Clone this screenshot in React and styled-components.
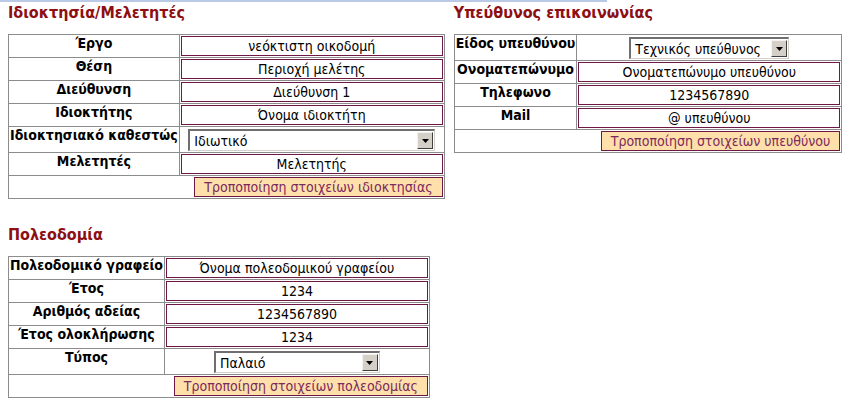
import React from 'react';
import styled, { createGlobalStyle } from 'styled-components';

const GlobalStyle = createGlobalStyle`
  body {
    margin: 0;
    background: #ffffff;
  }
`;

const FONT = `"DejaVu Sans Condensed", "DejaVu Sans", Tahoma, sans-serif`;
const GRID = '#8c8c8c';
const PURPLE = '#6e1848';

const Page = styled.div`
  font-family: ${FONT};
  font-size: 14px;
  color: #000;
`;

const TopLine = styled.div`
  width: 607px;
  height: 2px;
  background: #b9c9e6;
`;

const Content = styled.div`
  padding: 0 8px;
`;

const TopRow = styled.div`
  display: flex;
  align-items: flex-start;
  gap: 9px;
`;

const Section = styled.section`
  margin-top: ${(p) => p.top || 2}px;
`;

const Heading = styled.h2`
  margin: 0 0 12px 0;
  font-size: 16px;
  line-height: 18px;
  font-weight: bold;
  color: #8d0f12;
`;

const Grid = styled.table`
  border-collapse: collapse;
  border: 1px solid ${GRID};
`;

const LabelCell = styled.td`
  border: 1px solid ${GRID};
  padding: 1px;
  font-weight: bold;
  text-align: center;
  vertical-align: top;
  white-space: nowrap;
  line-height: 15px;
`;

const ValueCell = styled.td`
  border: 1px solid ${GRID};
  padding: ${(p) => (p.select ? '2px 1px 1px' : '1px')};
  text-align: center;
  vertical-align: middle;
`;

const ActionCell = styled.td`
  border: 1px solid ${GRID};
  padding: 1px;
  text-align: right;
`;

const Field = styled.div`
  box-sizing: border-box;
  width: 262px;
  height: 20px;
  border: 1px solid ${PURPLE};
  line-height: 18px;
  text-align: center;
  white-space: nowrap;
`;

const SelectBox = styled.div`
  box-sizing: border-box;
  display: inline-flex;
  align-items: center;
  width: ${(p) => p.width}px;
  height: 22px;
  border-top: 2px solid #6f6f6f;
  border-left: 2px solid #6f6f6f;
  border-right: 1px solid #d4d0c8;
  border-bottom: 1px solid #d4d0c8;
  background: #fff;
  vertical-align: middle;
`;

const SelectText = styled.span`
  flex: 1;
  padding-left: 4px;
  text-align: left;
  white-space: nowrap;
`;

const ArrowButton = styled.span`
  box-sizing: border-box;
  display: flex;
  align-items: center;
  justify-content: center;
  width: 16px;
  height: 17px;
  margin-right: 1px;
  background: #d4d0c8;
  border-top: 1px solid #f4f2ee;
  border-left: 1px solid #f4f2ee;
  border-right: 1px solid #404040;
  border-bottom: 1px solid #404040;
`;

const ActionButton = styled.button`
  height: 20px;
  padding: 0 9px;
  border: 1px solid ${PURPLE};
  background: #ffdfaa;
  color: #7a2a5e;
  font-family: ${FONT};
  font-size: 14px;
  line-height: 17px;
  cursor: pointer;
`;

function Select({ value, width }) {
  return (
    <SelectBox width={width}>
      <SelectText>{value}</SelectText>
      <ArrowButton>
        <svg width="7" height="4" viewBox="0 0 7 4">
          <path d="M0 0h7L3.5 4z" fill="#000" />
        </svg>
      </ArrowButton>
    </SelectBox>
  );
}

function FormTable({ rows, action }) {
  return (
    <Grid>
      <tbody>
        {rows.map((r) => (
          <tr key={r.label}>
            <LabelCell>{r.label}</LabelCell>
            <ValueCell select={!!r.select}>
              {r.select ? <Select value={r.value} width={r.select} /> : <Field>{r.value}</Field>}
            </ValueCell>
          </tr>
        ))}
        <tr>
          <ActionCell colSpan={2}>
            <ActionButton>{action}</ActionButton>
          </ActionCell>
        </tr>
      </tbody>
    </Grid>
  );
}

const ownership = [
  { label: 'Έργο', value: 'νεόκτιστη οικοδομή' },
  { label: 'Θέση', value: 'Περιοχή μελέτης' },
  { label: 'Διεύθυνση', value: 'Διεύθυνση 1' },
  { label: 'Ιδιοκτήτης', value: 'Όνομα ιδιοκτήτη' },
  { label: 'Ιδιοκτησιακό καθεστώς', value: 'Ιδιωτικό', select: 247 },
  { label: 'Μελετητές', value: 'Μελετητής' },
];

const contact = [
  { label: 'Είδος υπευθύνου', value: 'Τεχνικός υπεύθυνος', select: 160 },
  { label: 'Ονοματεπώνυμο', value: 'Ονοματεπώνυμο υπευθύνου' },
  { label: 'Τηλεφωνο', value: '1234567890' },
  { label: 'Mail', value: '@ υπευθύνου' },
];

const planning = [
  { label: 'Πολεοδομικό γραφείο', value: 'Όνομα πολεοδομικού γραφείου' },
  { label: 'Έτος', value: '1234' },
  { label: 'Αριθμός αδείας', value: '1234567890' },
  { label: 'Έτος ολοκλήρωσης', value: '1234' },
  { label: 'Τύπος', value: 'Παλαιό', select: 166 },
];

export default function App() {
  return (
    <Page>
      <GlobalStyle />
      <TopLine />
      <Content>
        <TopRow>
          <Section>
            <Heading>Ιδιοκτησία/Μελετητές</Heading>
            <FormTable rows={ownership} action="Τροποποίηση στοιχείων ιδιοκτησίας" />
          </Section>
          <Section>
            <Heading>Υπεύθυνος επικοινωνίας</Heading>
            <FormTable rows={contact} action="Τροποποίηση στοιχείων υπευθύνου" />
          </Section>
        </TopRow>
        <Section top={27}>
          <Heading>Πολεοδομία</Heading>
          <FormTable rows={planning} action="Τροποποίηση στοιχείων πολεοδομίας" />
        </Section>
      </Content>
    </Page>
  );
}
